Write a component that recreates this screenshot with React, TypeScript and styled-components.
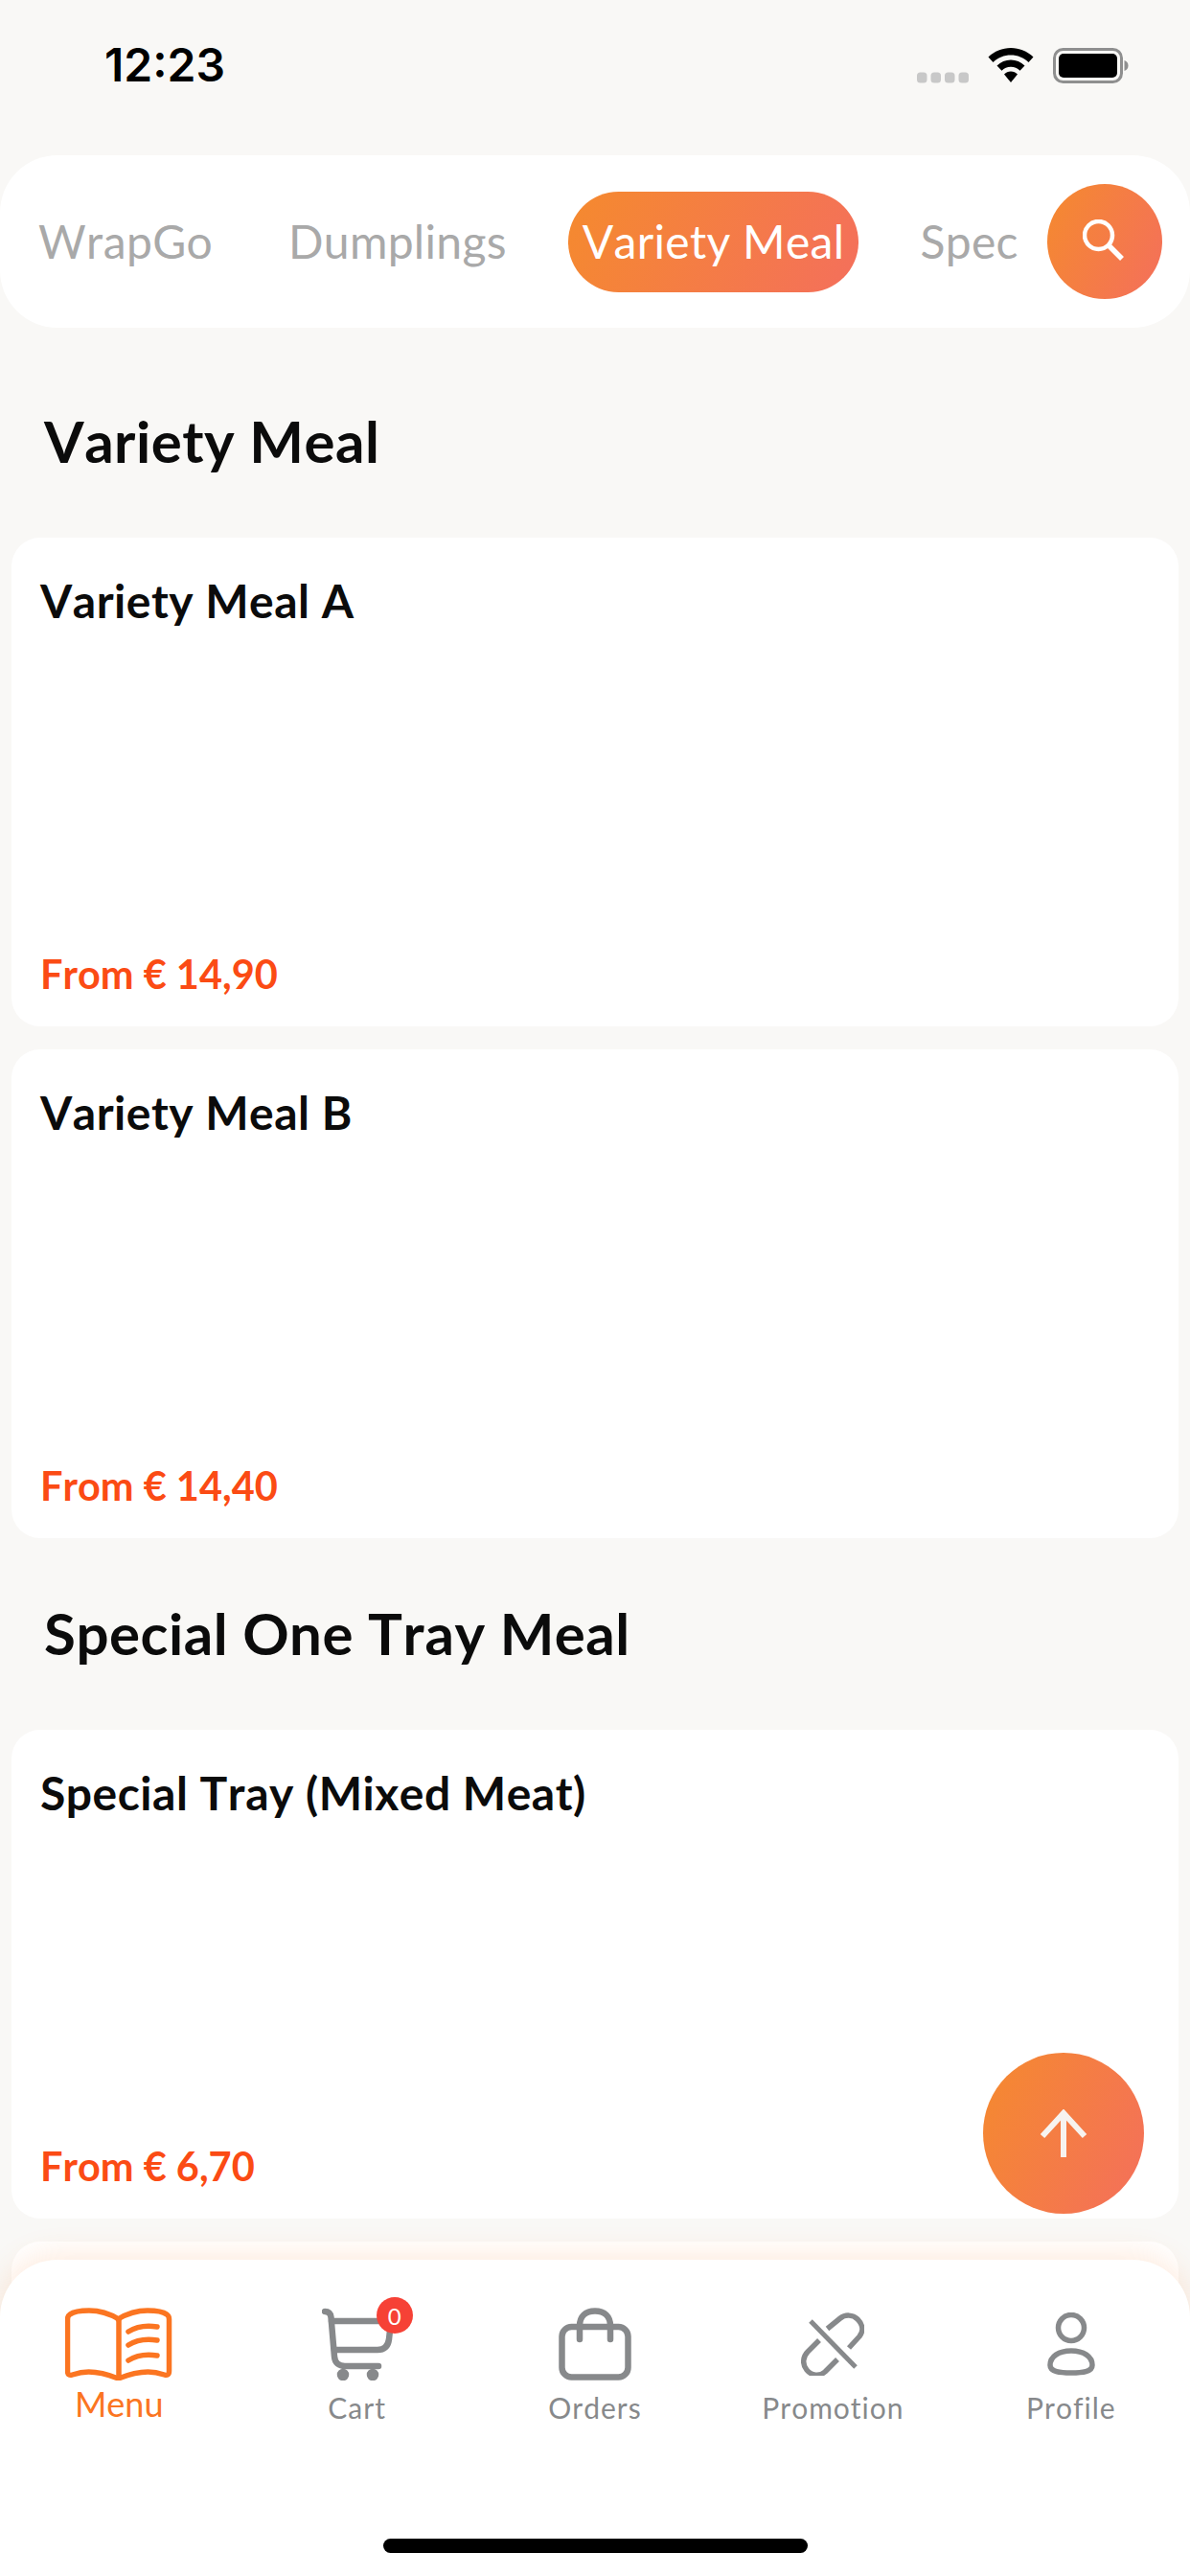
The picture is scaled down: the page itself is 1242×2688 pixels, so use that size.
import styled, { createGlobalStyle } from 'styled-components'

const GRADIENT = 'linear-gradient(115deg, #f58a2e 0%, #f46f5c 100%)'

const GlobalStyle = createGlobalStyle`
    html, body {
        margin: 0;
        padding: 0;
        background: #f9f8f6;
    }
    * {
        box-sizing: border-box;
    }
`

const Screen = styled.div`
    position: relative;
    width: 1242px;
    height: 2688px;
    overflow: hidden;
    background: #f9f8f6;
    font-family: Lato, "Liberation Sans", sans-serif;
    font-kerning: none;
`

const StatusBar = styled.div`
    height: 162px;
    padding: 40px 64px 0 109px;
    display: flex;
    justify-content: space-between;
    align-items: flex-start;
`

const Time = styled.span`
    font-family: Inter, "Liberation Sans", sans-serif;
    font-size: 48px;
    line-height: 56px;
    font-weight: 600;
    color: #000;
`

const StatusIcons = styled.div`
    display: flex;
    align-items: center;
    gap: 20px;
    margin-top: 9px;
`

const TabBar = styled.div`
    position: relative;
    height: 180px;
    border-radius: 60px;
    background: #fff;
    display: flex;
    align-items: center;
    padding-left: 40px;
`

const TabList = styled.div`
    width: 1022px;
    display: flex;
    align-items: center;
    gap: 79px;
    overflow: hidden;
    white-space: nowrap;
`

const Tab = styled.div<{ active?: boolean }>`
    flex: none;
    height: 105px;
    display: flex;
    align-items: center;
    padding: 0 ${(p) => (p.active ? '15px' : '0')} 2px;
    margin: 0 ${(p) => (p.active ? '-15px' : '0')};
    border-radius: 53px;
    font-size: 48px;
    font-weight: 400;
    letter-spacing: 0.3px;
    color: ${(p) => (p.active ? '#fff' : '#a9a9a9')};
    background: ${(p) => (p.active ? GRADIENT : 'none')};
`

const SearchButton = styled.div`
    position: absolute;
    left: 1093px;
    top: 30px;
    width: 120px;
    height: 120px;
    border-radius: 50%;
    background: ${GRADIENT};
    display: flex;
    align-items: center;
    justify-content: center;
`

const SectionTitle = styled.h2<{ first?: boolean }>`
    margin: 0;
    height: ${(p) => (p.first ? '219px' : '200px')};
    padding: ${(p) => (p.first ? '82px' : '63px')} 0 0 46px;
    font-size: 60px;
    line-height: 72px;
    font-weight: 700;
    letter-spacing: 0.5px;
    color: #0b0b0b;
`

const CardList = styled.div`
    display: flex;
    flex-direction: column;
    gap: 24px;
    padding: 0 12px;
`

const Card = styled.div`
    height: 510px;
    padding: 37px 30px 30px;
    border-radius: 30px;
    background: #fff;
    display: flex;
    flex-direction: column;
    justify-content: space-between;
`

const CardName = styled.div`
    font-size: 48px;
    line-height: 58px;
    font-weight: 700;
    letter-spacing: 0.5px;
    color: #0b0b0b;
`

const CardPrice = styled.div`
    font-size: 41.5px;
    line-height: 50px;
    font-weight: 700;
    color: #fb4b14;
`

const ScrollTopButton = styled.div`
    position: absolute;
    left: 1026px;
    top: 2142px;
    width: 168px;
    height: 168px;
    border-radius: 50%;
    background: ${GRADIENT};
    display: flex;
    align-items: center;
    justify-content: center;
`

const BottomNav = styled.div`
    position: absolute;
    left: 0;
    right: 0;
    top: 2358px;
    height: 330px;
    padding-top: 44px;
    border-radius: 60px 60px 0 0;
    background: #fff;
    box-shadow: 0 -6px 30px rgba(250, 130, 50, 0.16);
    display: grid;
    grid-template-columns: repeat(5, 1fr);
    align-content: start;
`

const NavItem = styled.div<{ active?: boolean }>`
    display: flex;
    flex-direction: column;
    align-items: center;
    color: ${(p) => (p.active ? '#fb7521' : '#87898b')};
`

const NavIconBox = styled.div`
    position: relative;
    height: 88px;
    display: flex;
    align-items: center;
    justify-content: center;
`

const NavLabel = styled.span<{ active?: boolean }>`
    font-size: ${(p) => (p.active ? '36px' : '30px')};
    line-height: 40px;
    letter-spacing: ${(p) => (p.active ? '0' : '1px')};
    margin-top: ${(p) => (p.active ? '-2px' : '2px')};
`

const Badge = styled.span`
    position: absolute;
    left: 57px;
    top: -5px;
    width: 38px;
    height: 38px;
    border-radius: 50%;
    background: #f64136;
    color: #fff;
    font-size: 24px;
    display: flex;
    align-items: center;
    justify-content: center;
`

const HomeIndicator = styled.div`
    position: absolute;
    left: 400px;
    top: 2649px;
    width: 443px;
    height: 15px;
    border-radius: 8px;
    background: #000;
`

function BatteryIcon() {
    return (
        <svg width="79" height="37" viewBox="0 0 79 37">
            <rect x="1.500" y="1.500" width="70" height="34" rx="9" fill="none" stroke="#8f8f8f" strokeWidth="3" />
            <rect x="6" y="6" width="61" height="25" rx="5" fill="#000" />
            <path d="M74.500 13c3 1 4 3 4 5.500s-1 4.500-4 5.500z" fill="#8f8f8f" />
        </svg>
    )
}

function StatusGroup() {
    return (
        <StatusIcons>
            <svg width="54" height="12" viewBox="0 0 54 12" style={{ marginTop: 26 }}>
                {[0, 14.5, 29, 43.5].map((x) => (
                    <rect key={x} x={x} width="10.500" height="11" y="0.500" rx="3.500" fill="#c8c8c8" />
                ))}
            </svg>
            <svg width="48" height="36" viewBox="0 0 48 36">
                <path d="M24 0C15 0 7 3.500 0.500 9.500l5 5.500C10.500 10 17 7.500 24 7.500S37.500 10 42.500 15l5-5.500C41 3.500 33 0 24 0z" fill="#000" />
                <path d="M24 12.500c-5.500 0-10.500 2.200-14.500 6l5 5.300c2.500-2.500 5.800-4 9.500-4s7 1.500 9.500 4l5-5.300c-4-3.800-9-6-14.500-6z" fill="#000" />
                <path d="M24 24.500c-2.800 0-5 1-7 3L24 36l7-8.500c-2-2-4.200-3-7-3z" fill="#000" />
            </svg>
            <BatteryIcon />
        </StatusIcons>
    )
}

function SearchIcon() {
    return (
        <svg width="44" height="44" viewBox="0 0 44 44" fill="none" stroke="#fff" style={{ margin: '-2px 0 0 -3px' }}>
            <circle cx="16.500" cy="16.500" r="14.500" strokeWidth="4.500" />
            <path d="M27 27l14 14" strokeWidth="5.500" />
        </svg>
    )
}

function UpArrow() {
    return (
        <svg width="50" height="50" viewBox="0 0 50 50" fill="none" stroke="#f7f3ef" strokeWidth="6">
            <path d="M25 3v47" />
            <path d="M3 28L25 4l22 24" />
        </svg>
    )
}

function BookIcon() {
    return (
        <svg width="112" height="76" viewBox="0 0 112 76" fill="none" stroke="currentColor" strokeWidth="5.500" strokeLinecap="round" strokeLinejoin="round">
            <path d="M56 12C46 6 36 3 25 3 16 3 9 4 5 7c-1.500 1-2.500 2.500-2.500 5v54c0 4 2 5 5 4 6-2 11-3 17-3 11 0 21 3 31 7 10-4 20-7 31-7 6 0 11 1 17 3 3 1 5 0 5-4V12c0-2.500-1-4-2.500-5-4-3-11-4-20-4-11 0-21 3-31 9z" />
            <path d="M56 12v60" />
            <path d="M66 25c8-5 18-7 30-5" />
            <path d="M66 39c8-5 18-7 30-5" />
            <path d="M66 55c8-5 18-7 30-5" />
        </svg>
    )
}

function CartIcon() {
    return (
        <svg width="74" height="76" viewBox="0 0 74 76" fill="none" stroke="currentColor" strokeWidth="6.500" strokeLinecap="round" strokeLinejoin="round">
            <path d="M3 4c4 0 6 2 6.500 6l3.500 41c.5 7 5 10 11 10h35" />
            <path d="M10 14h62l-2 19c-1 7-5 11-12 11H13" />
            <circle cx="22" cy="70" r="3" fill="currentColor" />
            <circle cx="53" cy="70" r="3" fill="currentColor" />
        </svg>
    )
}

function BagIcon() {
    return (
        <svg width="76" height="76" viewBox="0 0 76 76" fill="none" stroke="currentColor" strokeWidth="6.500" strokeLinecap="round" strokeLinejoin="round">
            <rect x="3.500" y="20" width="69" height="52.500" rx="10" />
            <path d="M22 33V19C22 9 28 3.500 38 3.500S54 9 54 19v14" />
        </svg>
    )
}

function PromoIcon() {
    return (
        <svg width="66" height="66" viewBox="0 0 66 66" fill="none" stroke="currentColor" strokeWidth="5.500" strokeLinejoin="round">
            <path d="M27.500 17L41 6c5-4 13-4 18 1 6 6 6 13 2 18L50 37" />
            <path d="M19 29L7 41c-5 5-6 13-1 19 5 6 13 7 19 2l13-13" />
            <path d="M10 9l47 48" strokeWidth="5" />
        </svg>
    )
}

function ProfileIcon() {
    return (
        <svg width="50" height="66" viewBox="0 0 50 66" fill="none" stroke="currentColor" strokeWidth="5.500">
            <circle cx="25" cy="16" r="13.500" />
            <path d="M25 40c-13 0-22 6-22 15 0 7 10 8 22 8s22-1 22-8c0-9-9-15-22-15z" />
        </svg>
    )
}

const tabs = ['WrapGo', 'Dumplings', 'Variety Meal', 'Special One Tray Meal']

export default function App() {
    return (
        <Screen>
            <GlobalStyle />
            <StatusBar>
                <Time>12:23</Time>
                <StatusGroup />
            </StatusBar>
            <TabBar>
                <TabList>
                    {tabs.map((t) => (
                        <Tab key={t} active={t === 'Variety Meal'}>{t}</Tab>
                    ))}
                </TabList>
                <SearchButton><SearchIcon /></SearchButton>
            </TabBar>
            <SectionTitle first>Variety Meal</SectionTitle>
            <CardList>
                <Card>
                    <CardName>Variety Meal A</CardName>
                    <CardPrice>From € 14,90</CardPrice>
                </Card>
                <Card>
                    <CardName>Variety Meal B</CardName>
                    <CardPrice>From € 14,40</CardPrice>
                </Card>
            </CardList>
            <SectionTitle>Special One Tray Meal</SectionTitle>
            <CardList>
                <Card>
                    <CardName>Special Tray (Mixed Meat)</CardName>
                    <CardPrice>From € 6,70</CardPrice>
                </Card>
                <Card />
            </CardList>
            <ScrollTopButton><UpArrow /></ScrollTopButton>
            <BottomNav>
                <NavItem active>
                    <NavIconBox><BookIcon /></NavIconBox>
                    <NavLabel active>Menu</NavLabel>
                </NavItem>
                <NavItem>
                    <NavIconBox>
                        <CartIcon />
                        <Badge>0</Badge>
                    </NavIconBox>
                    <NavLabel>Cart</NavLabel>
                </NavItem>
                <NavItem>
                    <NavIconBox><BagIcon /></NavIconBox>
                    <NavLabel>Orders</NavLabel>
                </NavItem>
                <NavItem>
                    <NavIconBox><PromoIcon /></NavIconBox>
                    <NavLabel>Promotion</NavLabel>
                </NavItem>
                <NavItem>
                    <NavIconBox><ProfileIcon /></NavIconBox>
                    <NavLabel>Profile</NavLabel>
                </NavItem>
            </BottomNav>
            <HomeIndicator />
        </Screen>
    )
}
